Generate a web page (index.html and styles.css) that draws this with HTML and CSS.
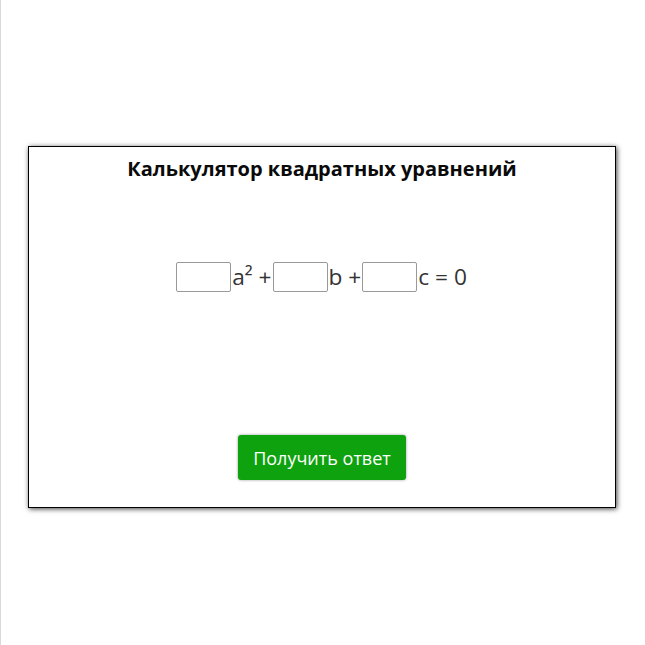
FILE: index.html
```html
<!DOCTYPE html>
<html lang="ru">
<head>
<meta charset="utf-8">
<title>Калькулятор квадратных уравнений</title>
<link rel="stylesheet" href="styles.css">
</head>
<body>
<div class="page">
  <div class="calc">
    <h1 class="calc-title">Калькулятор квадратных уравнений</h1>
    <div class="equation">
      <input class="coef" type="text"><span class="term">a² +</span><input class="coef" type="text"><span class="term">b +</span><input class="coef" type="text"><span class="term">c = 0</span>
    </div>
    <div class="actions">
      <button class="submit" type="button">Получить ответ</button>
    </div>
  </div>
</div>
</body>
</html>
```
FILE: styles.css
```css
html, body {
  margin: 0;
  padding: 0;
  background: #fff;
}
.page {
  min-height: 100vh;
  box-sizing: border-box;
  border-left: 1px solid #d9d9d9;
  padding-top: 146px;
  font-family: "Open Sans", sans-serif;
}
.calc {
  width: 586px;
  height: 360px;
  margin: 0 0 0 27px;
  border: 1px solid #000;
  box-shadow: 1px 1px 5px rgba(0,0,0,0.75);
  display: flex;
  flex-direction: column;
  align-items: center;
}
.calc-title {
  margin: 9px 0 0;
  font-size: 20px;
  font-weight: 700;
  color: #0a0a0a;
  line-height: 26px;
}
.equation {
  margin-top: 79px;
  display: flex;
  align-items: center;
  font-size: 22.7px;
  color: #333;
}
.coef {
  width: 55px;
  height: 30px;
  box-sizing: border-box;
  border: 1px solid #999;
  border-radius: 2px;
  padding: 0;
  margin: 0;
}
.term {
  padding: 0 1px 0 1px;
}
.actions {
  margin-top: 143px;
}
.submit {
  background: #0ea30e;
  color: #fff;
  border: none;
  border-radius: 3px;
  font-family: "Open Sans", sans-serif;
  font-size: 18px;
  height: 45px;
  padding: 0 15px;
  box-shadow: 0 0 3px rgba(0,0,0,0.4);
}
```
